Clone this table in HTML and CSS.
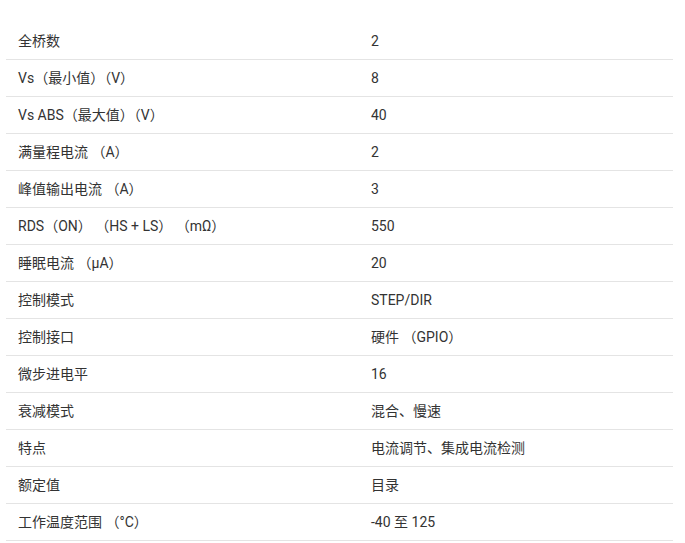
FILE: index.html
```html
<!DOCTYPE html>
<html lang="zh-CN">
<head>
<meta charset="utf-8">
<title>参数</title>
<link rel="stylesheet" href="styles.css">
</head>
<body>
<div class="table">
  <div class="row"><div class="cell">全桥数</div><div class="cell">2</div></div>
  <div class="row"><div class="cell">Vs（最小值）（V）</div><div class="cell">8</div></div>
  <div class="row"><div class="cell">Vs ABS（最大值）（V）</div><div class="cell">40</div></div>
  <div class="row"><div class="cell">满量程电流 （A）</div><div class="cell">2</div></div>
  <div class="row"><div class="cell">峰值输出电流 （A）</div><div class="cell">3</div></div>
  <div class="row"><div class="cell">RDS（ON） （HS + LS） （mΩ）</div><div class="cell">550</div></div>
  <div class="row"><div class="cell">睡眠电流 （µA）</div><div class="cell">20</div></div>
  <div class="row"><div class="cell">控制模式</div><div class="cell">STEP/DIR</div></div>
  <div class="row"><div class="cell">控制接口</div><div class="cell">硬件 （GPIO）</div></div>
  <div class="row"><div class="cell">微步进电平</div><div class="cell">16</div></div>
  <div class="row"><div class="cell">衰减模式</div><div class="cell">混合、慢速</div></div>
  <div class="row"><div class="cell">特点</div><div class="cell">电流调节、集成电流检测</div></div>
  <div class="row"><div class="cell">额定值</div><div class="cell">目录</div></div>
  <div class="row"><div class="cell">工作温度范围 （°C）</div><div class="cell">-40 至 125</div></div>
</div>
</body>
</html>
```
FILE: styles.css
```css
html, body {
  margin: 0;
  padding: 0;
  background: #ffffff;
}
body {
  font-family: Roboto, "Noto Sans CJK SC", sans-serif;
  font-size: 14px;
  color: #333333;
}
.table {
  margin: 23px 12px 0 6px;
  display: flex;
  flex-direction: column;
}
.row {
  display: grid;
  grid-template-columns: 353px 1fr;
  height: 36px;
  border-bottom: 1px solid #e4e4e4;
  align-items: center;
}
.cell {
  padding-left: 12px;
  line-height: 18px;
  white-space: nowrap;
}
```
